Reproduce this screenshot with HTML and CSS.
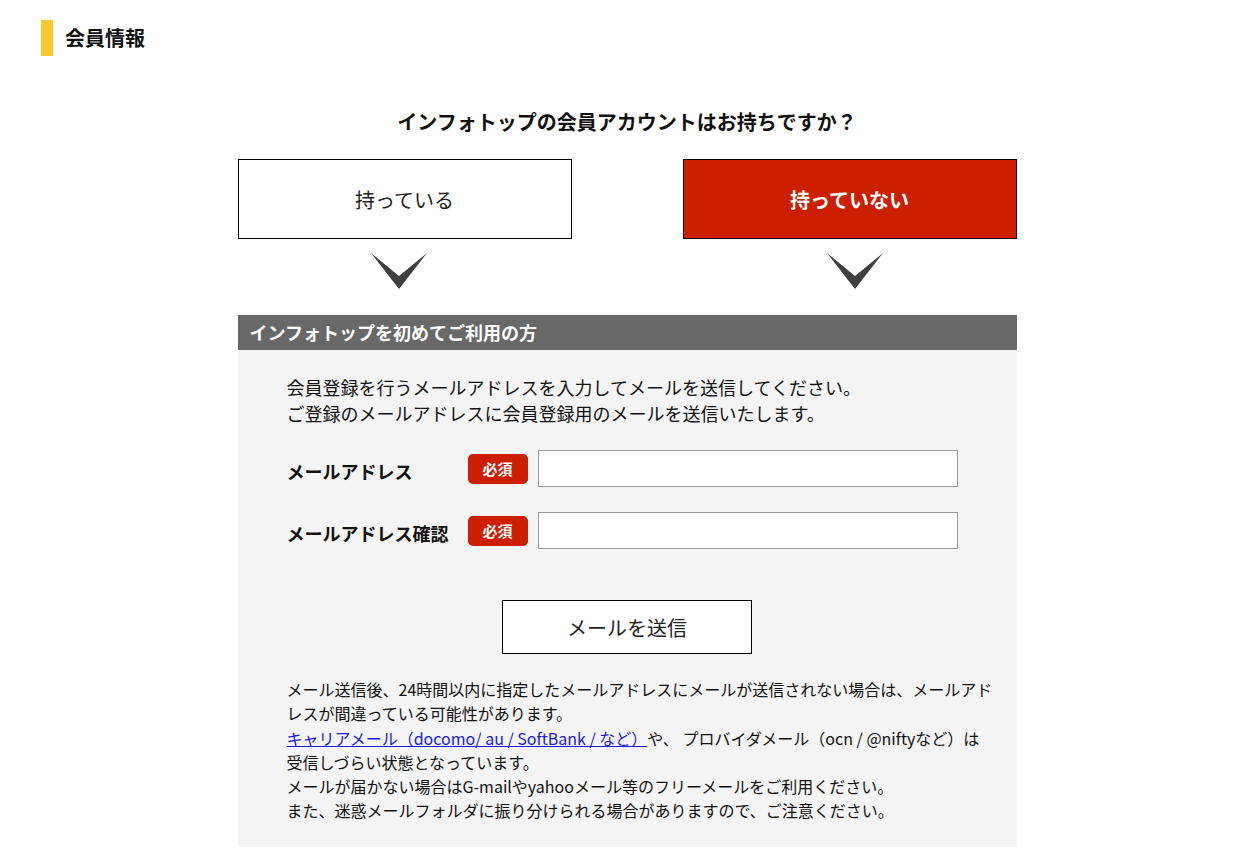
FILE: index.html
```html
<!DOCTYPE html>
<html lang="ja">

<head>
    <meta charset="UTF-8">
    <meta name="viewport" content="width=device-width, initial-scale=1.0">
    <title>会員情報</title>
    <link rel="stylesheet" href="styles.css">
</head>

<body>
    <div class="wrap">
        <h2 class="pageTitle">会員情報</h2>

        <div class="account">
            <h3 class="account-question">インフォトップの会員アカウントはお持ちですか？</h3>

            <div class="choice">
                <button type="button" class="choice-btn">持っている</button>
                <button type="button" class="choice-btn active">持っていない</button>
            </div>

            <div class="arrows">
                <div class="arrow arrow-left">
                    <svg width="56" height="36" viewBox="0 0 56 36"><path d="M0 0 L28 36 L56 0 L28 23 Z" fill="#3f3f3f" /></svg>
                </div>
                <div class="arrow arrow-right">
                    <svg width="56" height="36" viewBox="0 0 56 36"><path d="M0 0 L28 36 L56 0 L28 23 Z" fill="#3f3f3f" /></svg>
                </div>
            </div>

            <div class="register">
                <div class="register-title">インフォトップを初めてご利用の方</div>
                <div class="register-body">
                    <p class="lead">
                        会員登録を行うメールアドレスを入力してメールを送信してください。<br>
                        ご登録のメールアドレスに会員登録用のメールを送信いたします。
                    </p>

                    <div class="formRow">
                        <label class="formLabel">メールアドレス</label>
                        <span class="required">必須</span>
                        <input type="text" class="formInput">
                    </div>
                    <div class="formRow">
                        <label class="formLabel">メールアドレス確認</label>
                        <span class="required">必須</span>
                        <input type="text" class="formInput">
                    </div>

                    <div class="submitBar">
                        <button type="button" class="submit">メールを送信</button>
                    </div>

                    <p class="notice">
                        メール送信後、24時間以内に指定したメールアドレスにメールが送信されない場合は、メールアドレスが間違っている可能性があります。<br>
                        <a href="#">キャリアメール（docomo/ au / SoftBank / など）</a>や、 プロバイダメール（ocn / @niftyなど）は<br>受信しづらい状態となっています。<br>
                        メールが届かない場合はG-mailやyahooメール等のフリーメールをご利用ください。<br>
                        また、迷惑メールフォルダに振り分けられる場合がありますので、ご注意ください。
                    </p>
                </div>
            </div>
        </div>
    </div>
</body>

</html>
```

FILE: styles.css
```css
* {
    padding: 0;
    margin: 0;
    box-sizing: border-box;
}

html,
body {
    width: 100%;
    height: 100%;
    background-color: #FFFFFF;
}

body {
    font-family: "Noto Sans CJK JP", "Noto Sans", sans-serif;
    color: #111111;
}

.wrap {
    padding-top: 20px;
}

.pageTitle {
    height: 36px;
    line-height: 36px;
    margin-left: 41px;
    border-left: 12px solid #FCC72B;
    padding-left: 12px;
    font-size: 20px;
    font-weight: 700;
}

.account {
    width: 779px;
    margin: 0 auto;
}

.account-question {
    margin-top: 51px;
    line-height: 30px;
    font-size: 20px;
    font-weight: 700;
    text-align: center;
}

.choice {
    display: flex;
    justify-content: space-between;
    margin-top: 22px;
}

.choice-btn {
    width: 334px;
    height: 80px;
    border: 1px solid #000000;
    background-color: #FFFFFF;
    font-family: inherit;
    font-size: 20px;
    color: #222222;
}

.choice-btn.active {
    background-color: #CC1E00;
    color: #FFFFFF;
    font-weight: 700;
}

.arrows {
    display: flex;
    justify-content: space-between;
    height: 76px;
    padding-top: 14px;
}

.arrow {
    width: 334px;
    display: flex;
    justify-content: center;
}

.arrow svg {
    display: block;
}

.arrow-left svg {
    margin-left: -11px;
}

.arrow-right svg {
    margin-left: 10px;
}

.register-title {
    height: 35px;
    line-height: 35px;
    background-color: #686868;
    color: #FFFFFF;
    font-size: 18px;
    font-weight: 700;
    padding-left: 12px;
}

.register-body {
    background-color: #F4F4F4;
    padding: 24px 49px 24px 49px;
}

.lead {
    font-size: 18px;
    line-height: 26px;
}

.formRow {
    display: flex;
    align-items: center;
    margin-top: 24px;
}

.formRow+.formRow {
    margin-top: 25px;
}

.formLabel {
    width: 181px;
    font-size: 18px;
    font-weight: 700;
    padding-top: 4px;
}

.required {
    width: 60px;
    height: 30px;
    line-height: 30px;
    border-radius: 5px;
    background-color: #CC1E00;
    color: #FFFFFF;
    font-size: 15px;
    font-weight: 700;
    text-align: center;
    margin-right: 10px;
}

.formInput {
    width: 420px;
    height: 37px;
    border: 1px solid #999999;
    background-color: #FFFFFF;
}

.submitBar {
    display: flex;
    justify-content: center;
    margin-top: 51px;
}

.submit {
    width: 250px;
    height: 54px;
    border: 1px solid #000000;
    background-color: #FFFFFF;
    font-family: inherit;
    font-size: 20px;
    color: #222222;
}

.notice {
    width: 712px;
    margin-top: 23px;
    font-size: 16px;
    line-height: 24.3px;
}

.notice a {
    color: #1A1AE0;
    text-decoration: underline;
}
```
